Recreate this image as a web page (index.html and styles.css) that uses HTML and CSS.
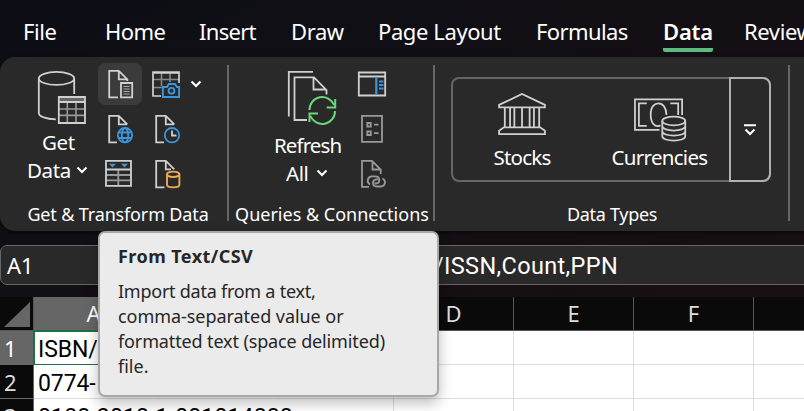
FILE: index.html
```html
<!DOCTYPE html>
<html lang="en">
<head>
<meta charset="utf-8">
<title>Workbook</title>
<link rel="stylesheet" href="styles.css">
</head>
<body>
<div class="app">
  <nav class="tabs">
    <span class="tab file">File</span>
    <span class="tab home">Home</span>
    <span class="tab insert">Insert</span>
    <span class="tab draw">Draw</span>
    <span class="tab layout">Page Layout</span>
    <span class="tab formulas">Formulas</span>
    <span class="tab data active">Data</span>
    <span class="tab review">Review</span>
  </nav>

  <section class="ribbon">
    <div class="group transform">
      <div class="tools">
        <div class="big get-data">
          <svg width="50" height="58" viewBox="0 0 50 58" fill="none" stroke="#d0d0d0" stroke-width="1.800">
            <ellipse cx="20.500" cy="8.400" rx="17.700" ry="6.500"/>
            <path d="M2.800 8.400V43c0 3.600 7.500 6 17 6.400M38.200 8.400V24"/>
            <path d="M22.800 27h26.200v5H22.800z" fill="#666" stroke="none"/>
            <path d="M31.300 32v20M40 32v20M22.800 39H49M22.800 45.400H49" stroke="#999" stroke-width="1.600"/>
            <path d="M22.800 27H49v26H22.800zM22.800 32H49"/>
          </svg>
          <span class="label get">Get</span>
          <span class="label line2"><span class="dat">Data</span><svg class="chev" width="12" height="8" viewBox="0 0 12 8"><path d="M1.500 1.500 6 6l4.500-4.500" fill="none" stroke="#fff" stroke-width="2"/></svg></span>
        </div>
        <div class="small-grid">
          <span class="tool hover"><svg width="28" height="30" viewBox="0 0 28 30" fill="none" stroke="#d0d0d0" stroke-width="1.800">
            <path d="M12 28.300H3.200V1.800h9.600l8.500 8.500V12M12.800 1.800v8.500h8.500"/><path d="M15 14h11.200v14.300H15z"/><path d="M17.500 17.500h6M17.500 20h6M17.500 22.500h6M17.500 25h6" stroke="#aaa" stroke-width="1.200"/></svg></span>
          <span class="tool pic"><svg width="30" height="30" viewBox="0 0 30 30" fill="none">
            <path d="M10.500 3v14M19 3v10M2 10.500h26M2 18.500h9" stroke="#888" stroke-width="1.600"/><path d="M10 27H2V3h26v11M2 3.800h26" stroke="#d0d0d0" stroke-width="1.700"/>
            <path d="M11.900 18h4l2-3h6l2 3h2.200v10H11.900z" stroke="#3b96dc" stroke-width="1.900"/><circle cx="20.500" cy="21.800" r="2.900" stroke="#3b96dc" stroke-width="1.900"/></svg>
            <svg class="chev" width="12" height="8" viewBox="0 0 12 8"><path d="M1.500 1.500 6 6l4.500-4.500" fill="none" stroke="#fff" stroke-width="2.200"/></svg></span>
          <span class="tool"><svg width="28" height="30" viewBox="0 0 28 30" fill="none" stroke="#d0d0d0" stroke-width="1.800">
            <path d="M11 28.300H3.200V1.800h9.600l8.500 8.500M12.800 1.800v8.500h8.500"/><g stroke="#3b96dc"><circle cx="19" cy="21.200" r="7.200"/><ellipse cx="19" cy="21.200" rx="3.200" ry="7.200"/><path d="M12.500 18.500h13M12.500 24h13"/></g></svg></span>
          <span class="tool clk"><svg width="28" height="30" viewBox="0 0 28 30" fill="none" stroke="#d0d0d0" stroke-width="1.800">
            <path d="M11 28.300H3.200V1.800h9.600l8.500 8.500M12.800 1.800v8.500h8.500"/><circle cx="19" cy="21.200" r="7.200" stroke="#3b96dc"/><path d="M19 16.500v5h4.500"/></svg></span>
          <span class="tool table"><svg width="28" height="30" viewBox="0 0 28 30" fill="none" stroke="#d0d0d0" stroke-width="1.800">
            <path d="M13.300 11v15M1 16h25M1 21.300h25" stroke="#999"/><path d="M1 1.800h25v25H1zM1 10.500h25"/><path d="M4 4.800h7L7.500 8.500zM16 4.800h7l-3.500 3.700z" fill="#3b96dc" stroke="none"/></svg></span>
          <span class="tool clk"><svg width="28" height="30" viewBox="0 0 28 30" fill="none" stroke="#d0d0d0" stroke-width="1.800">
            <path d="M11.500 28.300H3.200V1.800h9.600l8.500 8.500M12.800 1.800v8.500H18"/><g stroke="#eba954" stroke-width="1.900"><ellipse cx="20.200" cy="15.300" rx="6.200" ry="2.700"/><path d="M14 15.300v10.400c0 3.500 12.400 3.500 12.400 0V15.300"/></g></svg></span>
        </div>
      </div>
      <div class="caption c1"><span>Get &amp; Transform Data</span></div>
    </div>

    <div class="group queries">
      <div class="tools">
        <div class="big refresh">
          <svg width="50" height="56" viewBox="0 0 50 56" fill="none" stroke="#d0d0d0" stroke-width="1.800">
            <path d="M1.800 46.500V1.800H26M20 50H7.500V7.300H27L39.500 20v4.500M26.500 7.300V19.500H39"/>
            <path d="M22.500 40a12.700 12.700 0 0 1 24.500-5M48 41a12.700 12.700 0 0 1-24.500 5M48.200 29v8.500h-8.500M22.500 52v-8.500H31" stroke="#6cd67b" stroke-width="2"/>
          </svg>
          <span class="label ref">Refresh</span>
          <span class="label line2"><span class="all">All</span><svg class="chev" width="12" height="8" viewBox="0 0 12 8"><path d="M1.500 1.500 6 6l4.500-4.500" fill="none" stroke="#fff" stroke-width="2"/></svg></span>
        </div>
        <div class="column">
          <svg width="30" height="30" viewBox="0 0 30 30" fill="none"><path d="M1.800 3.500h26.400v23H1.800zM1.800 7.500h26.400" stroke="#d0d0d0" stroke-width="1.800"/><path d="M19.300 8.500v17" stroke="#3b96dc" stroke-width="2.200"/><path d="M22 12.500h4.500M22 16h4.500M22 19.500h4.500" stroke="#3b96dc" stroke-width="2"/></svg>
          <svg width="30" height="30" viewBox="0 0 30 30" fill="none" stroke="#999" stroke-width="1.800"><path d="M5 1.800h20v26H5zM10.300 9h3.500v3.500h-3.500zM10.300 17.500h3.500V21h-3.500zM17 10.700h4.500M17 19.200h4.500"/></svg>
          <svg width="30" height="30" viewBox="0 0 30 30" fill="none" stroke="#999" stroke-width="1.800"><path d="M12 27.800H5v-26h10l8.700 8.700V15M15.500 1.800v8.700h8.200"/><path d="M13 25.500a4.400 4.400 0 0 1 1.500-8.200h3.800c5 0 5.300 6.200 1.200 7.200h-2M25.500 19.500a4.200 4.200 0 0 1-1.200 8h-4.500c-5 0-5-6.300-.8-7.200h2"/></svg>
        </div>
      </div>
      <div class="caption c2"><span>Queries &amp; Connections</span></div>
    </div>

    <div class="group types">
      <div class="gallery">
        <div class="card stocks">
          <svg width="48" height="42" viewBox="0 0 50 44" fill="none" stroke="#d0d0d0" stroke-width="1.900"><path d="M1 12.500 25 1l24 11.500V15H1zM7 15v21M12.500 15v21M17 15v21M25 15v21M33 15v21M37.500 15v21M43 15v21M6 36h38l5 3.500V43H1v-3.500z"/></svg>
          <span class="stk">Stocks</span>
        </div>
        <div class="card currencies">
          <svg width="55" height="46" viewBox="0 0 56 46" fill="none" stroke="#d0d0d0" stroke-width="1.800"><path d="M27 33H2V2h48v16M14 6H6v.500c0 14 0 20 0 22.500h8M38 6h8v12"/><path d="M28 28.500c-6 3-10-3-10-11C18 9 22 6 26 6s8 4 8 12"/><ellipse cx="41.500" cy="24" rx="11.700" ry="4.400"/><path d="M29.800 24v15.500c0 6 23.400 6 23.400 0V24M29.800 29.200c0 6 23.400 6 23.400 0M29.800 34.400c0 6 23.400 6 23.400 0"/></svg>
          <span class="cur">Currencies</span>
        </div>
        <div class="more"><svg width="14" height="12" viewBox="0 0 14 12" fill="none" stroke="#fff" stroke-width="2"><path d="M1 1.200h12M2.500 5.500 7 10l4.500-4.500"/></svg></div>
      </div>
      <div class="caption c3"><span>Data Types</span></div>
    </div>
  </section>

  <div class="formula-bar">
    <span class="name-box">A1</span>
    <span class="formula">/ISSN,Count,PPN</span>
  </div>

  <div class="sheet">
    <div class="cell head corner"><svg width="33" height="33" viewBox="0 0 33 33"><path d="M30 5v25H4z" fill="#666"/></svg></div>
    <div class="cell head sel">A</div><div class="cell head"></div><div class="cell head"></div><div class="cell head">D</div><div class="cell head">E</div><div class="cell head">F</div><div class="cell head"></div>
    <div class="cell row sel">1</div><div class="cell picked">ISBN/</div><div class="cell"></div><div class="cell"></div><div class="cell"></div><div class="cell"></div><div class="cell"></div><div class="cell"></div>
    <div class="cell row">2</div><div class="cell spill">0774-</div><div class="cell spill"></div><div class="cell"></div><div class="cell"></div><div class="cell"></div><div class="cell"></div><div class="cell"></div>
    <div class="cell row">3</div><div class="cell wide"><span class="v3">0188-2018-1-001014888</span></div><div class="cell"></div><div class="cell"></div><div class="cell"></div><div class="cell"></div>
  </div>

  <aside class="tooltip">
    <strong>From Text/CSV</strong>
    <p><span class="l1">Import data from a text,</span><br><span class="l2">comma-separated value or</span><br><span class="l3">formatted text (space delimited)</span><br><span>file.</span></p>
  </aside>
</div>
</body>
</html>
```
FILE: styles.css
```css
* { box-sizing: border-box; }
body { margin: 0; font-family: "Noto Sans", sans-serif; color: #fff; }
.app { position: relative; width: 804px; height: 411px; overflow: hidden; background: linear-gradient(155deg, #0c0e15 0%, #130f14 50%, #1b1010 100%); }
span { white-space: nowrap; }

.tabs { height: 57px; display: grid; grid-template-columns: 82px 94px 92px 87px 158px 127px 81px 80px; padding-left: 23px; padding-top: 15px; font-size: 22px; line-height: 32px; }
.tab { justify-self: start; letter-spacing: -0.4px; }
.home { letter-spacing: -0.6px; }
.insert { letter-spacing: -0.7px; }
.formulas { letter-spacing: -0.6px; }
.active { font-weight: 600; height: 37px; border-bottom: 4px solid #5dbb80; border-radius: 2px; letter-spacing: -0.2px; }

.ribbon { height: 174px; display: flex; background: #292929; border-radius: 15px 0 0 15px; padding-top: 8px; box-shadow: 0 2px 4px #0008; }
.group { height: 156px; border-right: 2px solid #666; display: flex; flex-direction: column; justify-content: space-between; }
.transform { width: 229px; }
.queries { width: 206px; }
.types { width: 355px; }
.caption { font-size: 18px; line-height: 20px; height: 14px; display: flex; justify-content: center; align-items: center; white-space: nowrap; }
.c1 { padding-left: 9px; letter-spacing: -0.15px; }
.c2 { padding-left: 2px; }
.c3 { padding-left: 1px; letter-spacing: -0.3px; }
.tools { display: flex; }
.big { display: flex; flex-direction: column; font-size: 20.5px; letter-spacing: -0.4px; }
.label { line-height: 28px; }
.line2 { display: flex; align-items: center; gap: 7px; }
.get-data { width: 98px; padding: 5px 0 0 36px; }
.get { margin-left: 6px; }
.get-data .line2 { margin-left: -9px; gap: 5px; }
.small-grid { display: grid; grid-template-columns: 44px 70px; grid-auto-rows: 45px; margin-top: -2px; }
.tool { display: flex; align-items: center; justify-content: center; height: 42px; }
.hover { background: #3b3b3b; border-radius: 7px; }
.pic { gap: 9px; padding-right: 1px; }
.table { padding-right: 3px; }
.clk { justify-content: flex-start; padding-left: 11px; }
.refresh { width: 128px; padding: 5px 0 0 58px; }
.ref { margin-left: -13px; margin-top: 5px; letter-spacing: -0.9px; }
.refresh .line2 { margin-left: -1px; gap: 8px; }
.column { display: flex; flex-direction: column; gap: 15px; margin-top: 4px; }

.gallery { margin: 12px 0 0 16px; width: 320px; height: 105px; display: flex; border: 2px solid #666; border-radius: 8px; font-size: 20.5px; line-height: 28px; }
.card { display: flex; flex-direction: column; align-items: center; justify-content: space-between; padding: 14px 0 9px; }
.stocks { width: 138px; padding-left: 0; letter-spacing: -0.8px; }
.currencies { width: 137px; padding-top: 18px; letter-spacing: -0.7px; }
.currencies svg { margin-left: 1px; margin-bottom: -6px; }
.more { width: 42px; margin: -2px -2px -2px auto; border: 2px solid #b0b0b0; border-radius: 0 8px 8px 0; display: flex; align-items: center; justify-content: center; }

.formula-bar { margin-top: 14px; height: 40px; width: 820px; background: #292929; border: 1px solid #666; border-radius: 7px; display: flex; align-items: center; font-family: Roboto, sans-serif; font-size: 23.5px; }
.name-box { width: 433px; padding-left: 6px; font-family: "Noto Sans", sans-serif; font-size: 22px; }
.formula { letter-spacing: 0.35px; padding-top: 2px; }

.sheet { margin-top: 12px; display: grid; grid-template-columns: 34px repeat(7, 120px); grid-template-rows: repeat(4, 34px); font-family: Roboto, sans-serif; font-size: 23px; color: #000; }
.cell { background: #fff; border-right: 1px solid #ddd; border-bottom: 1px solid #ddd; line-height: 37px; padding-left: 4px; letter-spacing: -0.1px; }
.head { background: #0a0a0a; color: #ddd; border-color: #555; text-align: center; padding: 0; font-family: "Noto Sans", sans-serif; font-size: 22px; line-height: 33px; }
.row { background: #0a0a0a; color: #ddd; border-color: #666; font-family: "Noto Sans", sans-serif; font-size: 22px; line-height: 35px; }
.sel { background: #666; color: #fff; }
.spill { border-right-color: transparent; }
.wide { grid-column: span 3; }
.picked { outline: 2px solid #1d7044; outline-offset: -1px; }
.v3 { letter-spacing: 0.15px; }

.tooltip { position: absolute; left: 98px; top: 231px; width: 341px; height: 166px; padding: 11px 18px; background: #ebebeb; color: #262626; border: 2px solid #a8a8a8; border-radius: 7px; box-shadow: 0 6px 14px #0004; font-size: 18px; line-height: 25px; }
.tooltip strong { font-size: 18px; display: block; letter-spacing: 0.45px; }
.tooltip p { margin: 10px 0 0; }
.l1 { letter-spacing: -0.25px; }
.l2 { letter-spacing: -0.05px; }
.l3 { letter-spacing: -0.13px; }
```
